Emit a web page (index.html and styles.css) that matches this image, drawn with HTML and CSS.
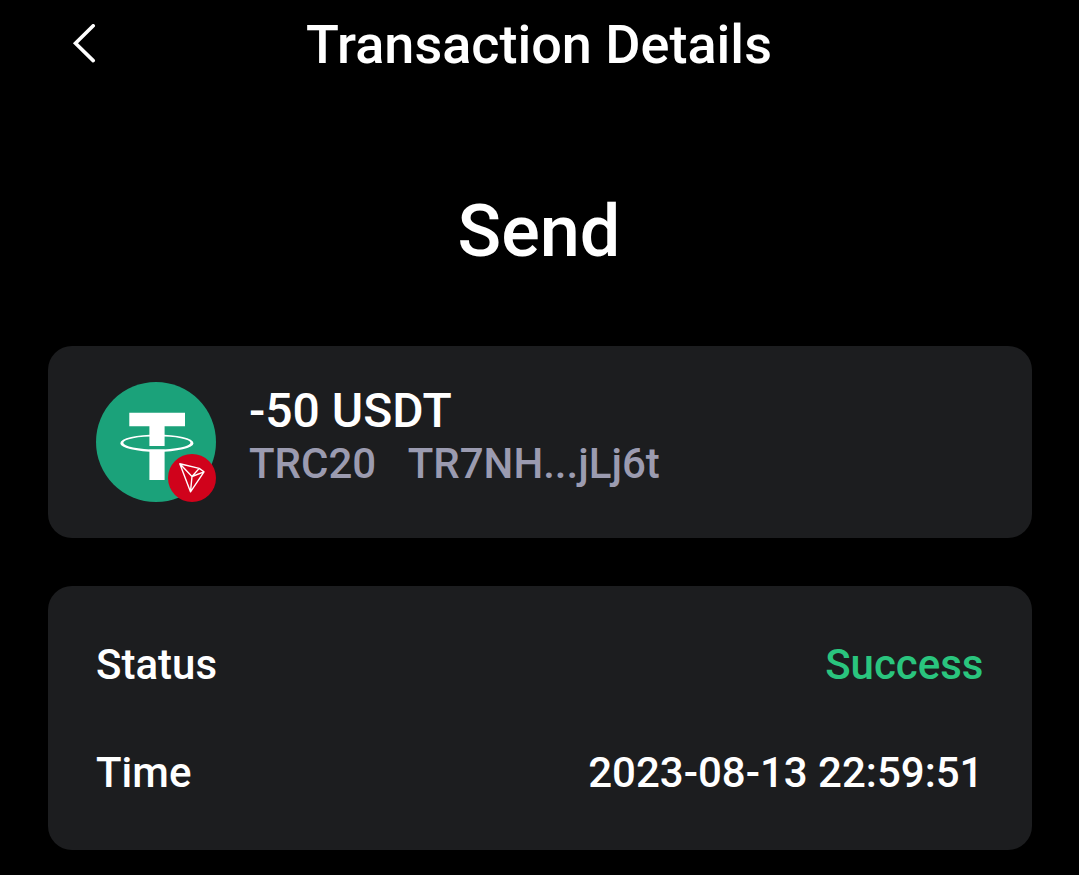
FILE: index.html
```html
<!DOCTYPE html>
<html lang="en">
<head>
<meta charset="utf-8">
<title>Transaction Details</title>
<link rel="stylesheet" href="styles.css">
</head>
<body>
<header class="topbar">
  <button class="back" aria-label="Back"><svg width="24" height="40" viewBox="0 0 24 40"><path d="M21.200 1.800 3.500 19.200 21.200 36.600"/></svg></button>
  <h1 class="title">Transaction Details</h1>
</header>
<main class="content">
  <h2 class="heading">Send</h2>
  <section class="card asset">
    <svg class="coin" viewBox="0 0 120 120">
      <circle cx="60" cy="60" r="60" fill="#1ba27a"/>
      <path d="M33.300 30.800H89V44.300H68.600V64H53.400V44.300H33.300ZM53.400 67.500H68.600V98H53.400Z" fill="#fff"/>
      <path fill-rule="evenodd" d="M24.300 61.200a36.600 8.700 0 1 0 73.200 0a36.600 8.700 0 1 0-73.200 0ZM27.300 60.800a33.600 6.600 0 1 0 67.200 0a33.600 6.600 0 1 0-67.200 0Z" fill="#fff"/>
      <circle cx="96" cy="96" r="24" fill="#d0021b"/>
      <path d="M83.800 81.800 103.200 86.400 108 89.800 94.500 109.800ZM83.800 81.800 96 94.500 94.500 109.800M96 94.500 108 89.800M96 94.500 103.200 86.400" fill="none" stroke="#fff" stroke-width="1.400" stroke-linejoin="round"/>
    </svg>
    <div class="info">
      <p class="amount">-50 USDT</p>
      <p class="meta"><span>TRC20</span><span>TR7NH...jLj6t</span></p>
    </div>
  </section>
  <dl class="card details">
    <div class="row"><dt>Status</dt><dd class="success">Success</dd></div>
    <div class="row"><dt>Time</dt><dd class="time">2023-08-13 22:59:51</dd></div>
  </dl>
</main>
</body>
</html>
```
FILE: styles.css
```css
* { box-sizing: border-box; margin: 0; padding: 0; }
body { width: 1079px; height: 875px; overflow: hidden; background: #000; color: #fff; font-family: Roboto, sans-serif; font-weight: 500; }
h1, h2 { font-weight: 500; }
.topbar { display: grid; grid-template-columns: 120px 1fr 121px; height: 88px; align-items: center; }
.back { display: flex; padding: 0 0 2px 72px; background: none; border: 0; }
.back svg { fill: none; stroke: #fff; stroke-width: 3.600; stroke-linecap: round; }
.title { padding-top: 1px; text-align: center; font-size: 54px; line-height: 88px; }
.content { padding: 0 47px 0 48px; }
.heading { height: 258px; padding: 102px 2px 0 0; text-align: center; font-size: 72px; line-height: 84px; }
.card { background: #1c1d1f; border-radius: 24px; }
.asset { display: flex; height: 192px; padding: 36px 48px; }
.coin { width: 120px; height: 120px; }
.info { padding-left: 33px; }
.amount { font-size: 48px; line-height: 58px; }
.meta { display: flex; gap: 31.500px; color: #9b9bb0; font-size: 42px; line-height: 48px; }
.details { height: 264px; margin-top: 48px; padding: 24px 48.500px 24px 48px; font-size: 42px; }
.row { display: flex; justify-content: space-between; align-items: center; height: 108px; }
.success { color: #2ac57e; }
```
